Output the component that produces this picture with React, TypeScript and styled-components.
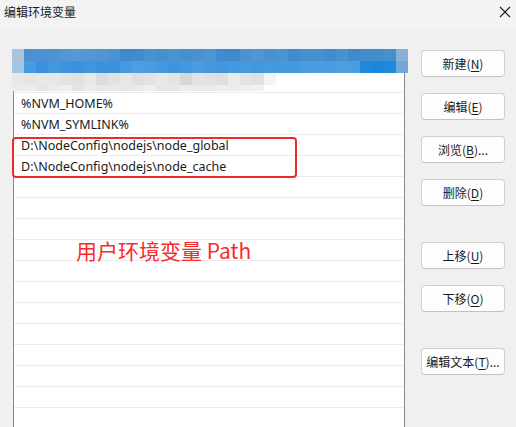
import React from "react";
import styled, { createGlobalStyle } from "styled-components";

const Global = createGlobalStyle`
  html, body { margin: 0; padding: 0; background: #f0f0f0; overflow: hidden; }
  body { font-family: "Noto Sans", "Noto Sans CJK SC", sans-serif; font-size: 12px; color: #1a1a1a; }
`;

const Window = styled.div`
  width: 516px;
  height: 427px;
  background: #f0f0f0;
  display: flex;
  flex-direction: column;
  overflow: hidden;
`;

const TitleBar = styled.div`
  flex: none;
  height: 28px;
  display: flex;
  align-items: flex-start;
  justify-content: space-between;
  padding: 3px 5px 0 4px;
  box-sizing: border-box;
  background: #f3f3f3;
`;

const Title = styled.span`
  font-family: "Noto Sans CJK SC", sans-serif;
  font-size: 12px;
  line-height: 18px;
  color: #1a1a1a;
`;

const Close = styled.div`
  width: 12px;
  height: 12px;
  margin-top: 3px;
  display: flex;
`;

const Body = styled.div`
  flex: 1;
  min-height: 0;
  display: flex;
  align-items: flex-start;
  gap: 16px;
  padding: 22px 0 0 13px;
  overflow: hidden;
`;

const ListBox = styled.div`
  position: relative;
  flex: none;
  width: 392px;
  height: 400px;
  box-sizing: border-box;
  background: #fff;
  border: 1px solid #868a8e;
  display: flex;
  flex-direction: column;
`;

const Row = styled.div`
  height: 21px;
  flex: none;
  box-sizing: border-box;
  border-bottom: 1px solid #ececec;
  padding-left: 7px;
  display: flex;
  align-items: center;
  font-family: "Noto Sans", "Noto Sans CJK SC", sans-serif;
  font-size: 12.5px;
  color: #1a1a1a;
  white-space: nowrap;
`;

const Mosaic = styled.svg`
  position: absolute;
  left: -2px;
  top: -2px;
`;

const Highlight = styled.div`
  position: absolute;
  left: -2px;
  top: 86px;
  width: 285px;
  height: 41px;
  box-sizing: border-box;
  border: 2px solid #ec2b2b;
  border-radius: 4px;
`;

const Note = styled.div`
  position: absolute;
  left: 62px;
  top: 186px;
  font-family: "Noto Sans CJK SC", sans-serif;
  font-size: 21px;
  line-height: 26px;
  color: #fa2a2a;
  white-space: nowrap;
`;

const Buttons = styled.div`
  display: flex;
  flex-direction: column;
  gap: 16px;
`;

const Button = styled.div<{ $spaced?: boolean }>`
  width: 84px;
  height: 27px;
  box-sizing: border-box;
  margin-top: ${(p) => (p.$spaced ? "20px" : "0")};
  background: #fdfdfd;
  border: 1px solid #d0d0d0;
  border-bottom-color: #c2c2c2;
  border-radius: 4px;
  display: flex;
  align-items: center;
  justify-content: center;
  font-family: "Noto Sans CJK SC", sans-serif;
  font-size: 12px;
  color: #1a1a1a;
  white-space: nowrap;
`;

const Key = styled.span`
  text-decoration: underline;
  text-underline-offset: 2px;
`;

const blueTop = [
  "#a9c4dc", "#4b90d0", "#4c92d2", "#4d93d2", "#5197d4", "#5499d5", "#5398d4", "#4f96d3",
  "#4a92d1", "#3d8bcd", "#3f8ccd", "#4a91d0", "#4790cf", "#4a92d0", "#4790cf", "#4a91d0",
  "#4f95d2", "#3f8bcd", "#3d8acd", "#4b92d0", "#5096d3", "#4a91d0", "#4c93d1", "#3f8ccd",
  "#4690cf", "#4790cf", "#3f8bcd", "#4a91d0", "#3f8acd", "#418dce", "#418dce", "#4590cf",
  "#89b0d6",
];
const blueBottom = [
  "#a3c6e2", "#4a9ae1", "#3a90dc", "#4497de", "#3d93dd", "#3c93dd", "#4096dd", "#3c93dd",
  "#3c93dd", "#4499e0", "#4c9de1", "#4a9be0", "#4498df", "#3e94dd", "#4398df", "#4a9ce1",
  "#4398de", "#4196dd", "#4398df", "#4499df", "#4297de", "#449ade", "#4398df", "#4499de",
  "#4a9be0", "#4c9ce0", "#4a9ce0", "#4d9de1", "#4c9ce0", "#1f88d9", "#1b86da", "#1e88d9",
  "#76a8d6",
];
const grayA = [
  "#e9e9e9", "#e6e6e6", "#e9e8e6", "#e7e7e7", "#e3e3e4", "#e2e2e2", "#e8e8e7", "#dcdbdf",
  "#e3e2e2", "#e6e6e5", "#e0dfdf", "#e2e2e2", "#e7e7e6", "#e4e4e4", "#d9d6d6", "#e2e3e3",
  "#e4e0df", "#e0dfe0", "#ebebea", "#e4e2e1", "#e0e0e3", "#f4f4f4", "#ffffff",
];
const grayB = [
  "#ebebeb", "#ececec", "#e6e6e6", "#ebebeb", "#eeeeee", "#e4e4e4", "#ebebeb", "#e6e7e6",
  "#e8e8e8", "#e7e7e7", "#e9e9e9", "#eeeeee", "#e7e6e6", "#e7e7e7", "#ececec", "#eaeaea",
  "#ebeaea", "#ededed", "#ececec", "#eeeeee", "#f1f1f1", "#ffffff", "#ffffff",
];

const CloseIcon = () => (
  <svg width="12" height="12" viewBox="0 0 12 12">
    <path d="M1 1 L11 11 M11 1 L1 11" stroke="#1a1a1a" strokeWidth="1.1" fill="none" />
  </svg>
);

const MosaicImage = () => (
  <Mosaic width="396" height="42" viewBox="0 0 396 42">
    {blueTop.map((c, i) => (
      <rect key={"a" + i} x={i * 12} y={0} width={12} height={12} fill={c} />
    ))}
    {blueBottom.map((c, i) => (
      <rect key={"b" + i} x={i * 12} y={12} width={12} height={12} fill={c} />
    ))}
    {grayA.map((c, i) => (
      <rect key={"c" + i} x={i * 12} y={24} width={12} height={12} fill={c} />
    ))}
    {grayB.map((c, i) => (
      <rect key={"d" + i} x={i * 12} y={36} width={12} height={6} fill={c} />
    ))}
  </Mosaic>
);

const entries = [
  "",
  "",
  "%NVM_HOME%",
  "%NVM_SYMLINK%",
  "D:\\NodeConfig\\nodejs\\node_global",
  "D:\\NodeConfig\\nodejs\\node_cache",
];

export default function App() {
  const rows = [...entries, ...Array(14).fill("")];
  return (
    <>
      <Global />
      <Window>
        <TitleBar>
          <Title>编辑环境变量</Title>
          <Close>
            <CloseIcon />
          </Close>
        </TitleBar>
        <Body>
          <ListBox>
            {rows.map((t, i) => (
              <Row key={i}>{t}</Row>
            ))}
            <MosaicImage />
            <Highlight />
            <Note>用户环境变量 Path</Note>
          </ListBox>
          <Buttons>
            <Button>新建(<Key>N</Key>)</Button>
            <Button>编辑(<Key>E</Key>)</Button>
            <Button>浏览(<Key>B</Key>)...</Button>
            <Button>删除(<Key>D</Key>)</Button>
            <Button $spaced>上移(<Key>U</Key>)</Button>
            <Button>下移(<Key>O</Key>)</Button>
            <Button $spaced>编辑文本(<Key>T</Key>)...</Button>
          </Buttons>
        </Body>
      </Window>
    </>
  );
}
